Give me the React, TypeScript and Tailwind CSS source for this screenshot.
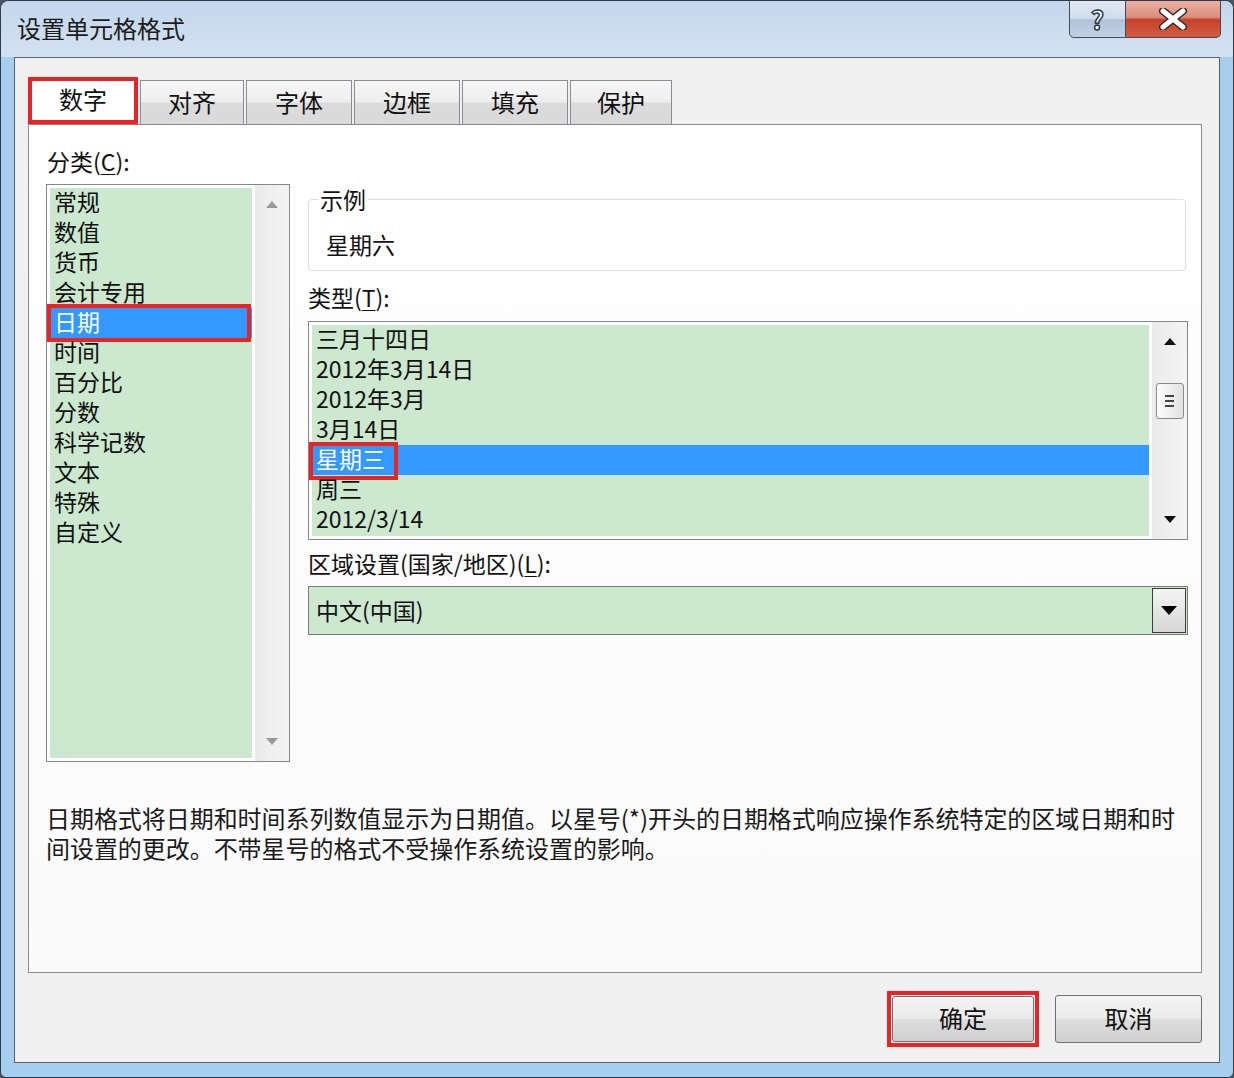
import React from "react";

const categories = [
  "常规",
  "数值",
  "货币",
  "会计专用",
  "日期",
  "时间",
  "百分比",
  "分数",
  "科学记数",
  "文本",
  "特殊",
  "自定义",
];

const types = [
  "三月十四日",
  "2012年3月14日",
  "2012年3月",
  "3月14日",
  "星期三",
  "周三",
  "2012/3/14",
];

const tabs = [
  { label: "对齐", w: "w-[104px]" },
  { label: "字体", w: "w-[106px]" },
  { label: "边框", w: "w-[106px]" },
  { label: "填充", w: "w-[106px]" },
  { label: "保护", w: "w-[102px]" },
];

const Accel = ({ children }: { children: React.ReactNode }) => (
  <span className="underline decoration-1 underline-offset-[3px]">{children}</span>
);

const Arrow = ({ up, color }: { up?: boolean; color: string }) => (
  <svg width="12" height="7" viewBox="0 0 12 7">
    <path d={up ? "M0 7 L6 0 L12 7 Z" : "M0 0 L12 0 L6 7 Z"} fill={color} />
  </svg>
);

const App = () => {
  return (
    <div className="w-[1234px] h-[1078px] bg-[#4a5561] font-['Noto_Sans_CJK_SC',sans-serif] text-[#111]">
      <div className="w-full h-full flex flex-col rounded-t-[9px] rounded-b-[6px] border border-[#2f3b47] bg-[#a6cfee] overflow-hidden">
        {/* title bar */}
        <div className="h-[56px] flex justify-between items-start bg-[linear-gradient(#c3d6ec,#d3e2f1)]">
          <div className="self-center pl-[16px] pb-[2px] text-[24px] leading-none text-[#1c1c1c]">
            设置单元格格式
          </div>
          <div className="flex mr-[12px] -mt-px">
            <div className="w-[57px] h-[38px] flex items-center justify-center border border-[#3d4b5b] rounded-bl-[5px] bg-[linear-gradient(#e3eaf4_0%,#cfdbea_50%,#aec2da_52%,#c2d2e5_100%)] text-[26px] font-bold leading-none text-white [-webkit-text-stroke:1.5px_#2c3b4b]">
              ?
            </div>
            <div className="w-[95px] h-[38px] flex items-center justify-center border border-l-0 border-[#3d4b5b] rounded-br-[5px] bg-[linear-gradient(#eab0a2_0%,#dc8e7c_45%,#c6432b_52%,#d45a40_100%)]">
              <svg width="30" height="22" viewBox="0 0 30 22">
                <path d="M5 3 L25 19 M25 3 L5 19" stroke="#3a2a28" strokeWidth="8" strokeLinecap="round" />
                <path d="M5 3 L25 19 M25 3 L5 19" stroke="#ffffff" strokeWidth="5" strokeLinecap="round" />
              </svg>
            </div>
          </div>
        </div>

        {/* client area */}
        <div className="flex-1 px-[13px] pb-[14px] flex">
          <div className="flex-1 flex flex-col border border-[#55636f] bg-[#f0f0f0] pt-[19px] pl-[13px]">
            {/* tabs */}
            <div className="flex items-end gap-[2px]">
              <div className="relative z-10 w-[110px] h-[47px] border-[4px] border-[#ea2424] bg-white flex items-center justify-center text-[24px] leading-none pb-[3px]">
                数字
              </div>
              {tabs.map((t) => (
                <div
                  key={t.label}
                  className={`${t.w} h-[44px] border border-b-0 border-[#898c95] bg-[linear-gradient(#f6f6f6_0%,#eeeeee_48%,#dcdcdc_52%,#d9d9d9_100%)] flex items-center justify-center text-[24px] leading-none pb-[2px]`}
                >
                  {t.label}
                </div>
              ))}
            </div>

            {/* panel */}
            <div className="w-[1174px] h-[849px] border border-[#898c95] bg-[linear-gradient(#ffffff,#fafafa)] pl-[17px] pt-[21px] flex flex-col">
              <div className="flex items-start gap-[18px]">
                {/* category */}
                <div className="w-[244px] flex flex-col">
                  <div className="ml-[1px] text-[23px] leading-[30px]">
                    分类(<Accel>C</Accel>):
                  </div>
                  <div className="mt-[8px] h-[578px] border border-[#828790] bg-white flex">
                    <div className="flex-1 p-[3px] flex">
                      <div className="flex-1 bg-[#cce8cf]">
                        {categories.map((c) => (
                          <div
                            key={c}
                            className={`relative h-[30px] pl-[4px] text-[23px] leading-[27px] ${
                              c === "日期" ? "bg-[#3399ff] text-white" : ""
                            }`}
                          >
                            {c}
                            {c === "日期" && (
                              <div className="absolute -left-[3px] -top-[4px] w-[204px] h-[38px] border-[4px] border-[#ea2424]" />
                            )}
                          </div>
                        ))}
                      </div>
                    </div>
                    <div className="w-[34px] bg-[linear-gradient(90deg,#eaeaea,#f4f4f4)] flex flex-col items-center justify-between py-[16px]">
                      <Arrow up color="#9a9a9a" />
                      <Arrow color="#9a9a9a" />
                    </div>
                  </div>
                </div>

                {/* right column */}
                <div className="w-[880px] mt-[38px] flex flex-col">
                  <fieldset className="w-[878px] border border-[#d5dfe5] rounded-[4px] pb-[12px]">
                    <legend className="ml-[9px] px-[2px] text-[23px] leading-[30px]">示例</legend>
                    <div className="pt-[16px] pl-[17px] text-[23px] leading-[28px]">星期六</div>
                  </fieldset>

                  <div className="mt-[12px] h-[30px] text-[23px] leading-[28px]">
                    类型(<Accel>T</Accel>):
                  </div>
                  <div className="mt-[8px] h-[219px] border border-[#828790] bg-white flex">
                    <div className="flex-1 p-[3px] flex">
                      <div className="flex-1 bg-[#cce8cf]">
                        {types.map((t) => (
                          <div
                            key={t}
                            className={`relative h-[30px] pl-[4px] text-[23px] leading-[27px] ${
                              t === "星期三" ? "bg-[#3399ff] text-white" : ""
                            }`}
                          >
                            {t}
                            {t === "星期三" && (
                              <div className="absolute -left-[3px] -top-[3px] w-[89px] h-[38px] border-[4px] border-[#ea2424]" />
                            )}
                          </div>
                        ))}
                      </div>
                    </div>
                    <div className="w-[35px] bg-[linear-gradient(90deg,#eaeaea,#f4f4f4)] flex flex-col items-center py-[16px]">
                      <Arrow up color="#111" />
                      <div className="mt-[38px] w-[28px] h-[36px] border border-[#8a8a8a] rounded-[3px] bg-[linear-gradient(90deg,#fbfbfb,#e2e2e2)] flex flex-col items-center justify-center gap-[3px]">
                        <div className="w-[9px] h-[2px] bg-[#444]" />
                        <div className="w-[9px] h-[2px] bg-[#444]" />
                        <div className="w-[9px] h-[2px] bg-[#444]" />
                      </div>
                      <div className="flex-1" />
                      <Arrow color="#111" />
                    </div>
                  </div>

                  <div className="mt-[9px] h-[30px] text-[23px] leading-[28px]">
                    区域设置(国家/地区)(<Accel>L</Accel>):
                  </div>
                  <div className="mt-[7px] h-[49px] border border-[#7a7a7a] bg-[#cce8cf] flex items-center">
                    <div className="flex-1 pl-[7px] pb-[2px] text-[23px] leading-[28px]">中文(中国)</div>
                    <div className="mr-[1px] w-[34px] h-[45px] border border-[#3c3c3c] bg-[linear-gradient(#f4f4f4,#d6d6d6)] flex items-center justify-center">
                      <svg width="16" height="9" viewBox="0 0 16 9">
                        <path d="M0 0 L16 0 L8 9 Z" fill="#000" />
                      </svg>
                    </div>
                  </div>
                </div>
              </div>

              <div className="mt-[41px] text-[24px] leading-[30px] text-[#1a1a1a] tracking-[-0.05px]">
                <div className="whitespace-nowrap">
                  日期格式将日期和时间系列数值显示为日期值。以星号(*)开头的日期格式响应操作系统特定的区域日期和时
                </div>
                <div className="whitespace-nowrap">间设置的更改。不带星号的格式不受操作系统设置的影响。</div>
              </div>
            </div>

            {/* buttons */}
            <div className="mt-[18px] flex justify-end items-center gap-[16px] pr-[17px]">
              <div className="border-[4px] border-[#ea2424] p-[1px]">
                <button className="w-[142px] h-[46px] border border-[#707070] rounded-[3px] bg-[linear-gradient(#f3f3f3_0%,#ebebeb_48%,#dddddd_52%,#cfcfcf_100%)] text-[24px] leading-none pb-[2px]">
                  确定
                </button>
              </div>
              <button className="w-[147px] h-[48px] border border-[#707070] rounded-[3px] bg-[linear-gradient(#f3f3f3_0%,#ebebeb_48%,#dddddd_52%,#cfcfcf_100%)] text-[24px] leading-none pb-[2px]">
                取消
              </button>
            </div>
          </div>
        </div>
      </div>
    </div>
  );
};

export default App;
